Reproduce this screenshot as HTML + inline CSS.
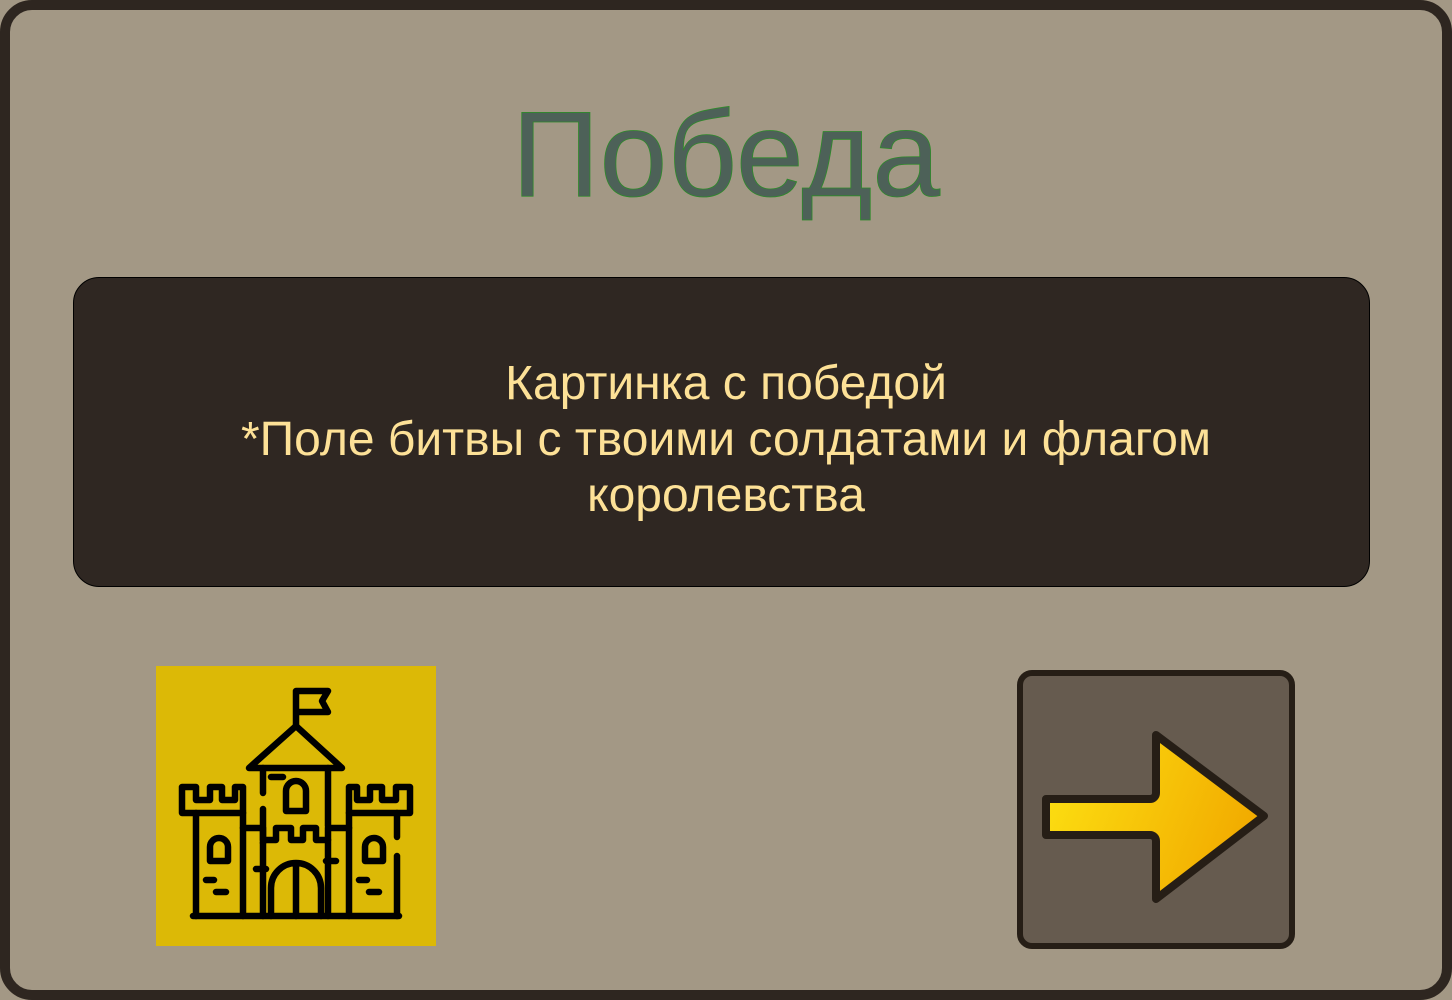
<!DOCTYPE html>
<html><head><meta charset="utf-8"><style>
html,body{margin:0;padding:0;width:1452px;height:1000px;overflow:hidden;background:#a39885}
.frame{position:absolute;left:0;top:0;width:1432px;height:980px;border:10px solid #2e2620;border-radius:32px;background:#a39885}
.title{position:absolute;left:0;width:1452px;top:74px;text-align:center;font-family:"Liberation Sans",sans-serif;font-size:122px;color:#4d6158;-webkit-text-stroke:0.8px #2e8a2a;line-height:160px;letter-spacing:0px}
.box{position:absolute;left:73px;top:277px;width:1295px;height:308px;background:#2f2722;border:1px solid #000;border-radius:26px}
.txt{position:absolute;left:0;width:1452px;top:356px;text-align:center;font-family:"Liberation Sans",sans-serif;font-size:48px;line-height:56px;color:#fde197}
svg{position:absolute}
</style></head><body>
<div class="frame"></div>
<div class="title">Победа</div>
<div class="box"></div>
<div class="txt">Картинка с победой<br>*Поле битвы с твоими солдатами и флагом<br>королевства</div>
<svg style="left:156px;top:666px" width="280" height="280" viewBox="0 0 280 280">
<rect width="280" height="280" fill="#dcb906"/>
<g fill="none" stroke="#000" stroke-width="6.5" stroke-linecap="round" stroke-linejoin="round">
<path d="M140 60V25h32l-6 10 6 11h-32"/>
<path d="M140 60L93 102h93z"/>
<path d="M107 102v25M107 143v34M172 102v58"/>
<path d="M130 145v-20a10 10 0 0 1 20 0v20z"/>
<path d="M115 111h12"/>
<path d="M26 121v26h61V121h-8v13h-13v-13h-12v13H40v-13z"/>
<path d="M40 147v103M87 147v103"/>
<path d="M254 121v26h-61V121h8v13h13v-13h12v13h14v-13z"/>
<path d="M193 147v103M241 147v24M241 190v60"/>
<path d="M37 250h206"/>
<path d="M87 162h20v12h13v-12h15v12h12v-12h13v12h12v-12h21"/>
<path d="M107 177v73M172 174v76"/>
<path d="M54 195v-14a9 9 0 0 1 18 0v14z"/>
<path d="M209 195v-14a9 9 0 0 1 18 0v14z"/>
<path d="M115 250v-28a25 25 0 0 1 50 0v28M140 199v51"/>
<path d="M100 203h10M170 195h10M50 214h8M60 226h10M203 214h8M213 226h10"/>
</g></svg>
<svg style="left:1010px;top:660px" width="300" height="300" viewBox="0 0 300 300">
<defs><linearGradient id="g" x1="0" y1="0" x2="1" y2="0.3"><stop offset="0" stop-color="#fde313"/><stop offset="1" stop-color="#f2ac00"/></linearGradient></defs>
<rect x="10" y="13" width="272" height="273" rx="12" fill="#665b4f" stroke="#261e16" stroke-width="6"/>
<path d="M36 139h104a6 6 0 0 0 6-6V75l108 81-108 83v-58a6 6 0 0 0-6-6H36z" fill="url(#g)" stroke="#261e16" stroke-width="8" stroke-linejoin="round"/>
</svg>
</body></html>
